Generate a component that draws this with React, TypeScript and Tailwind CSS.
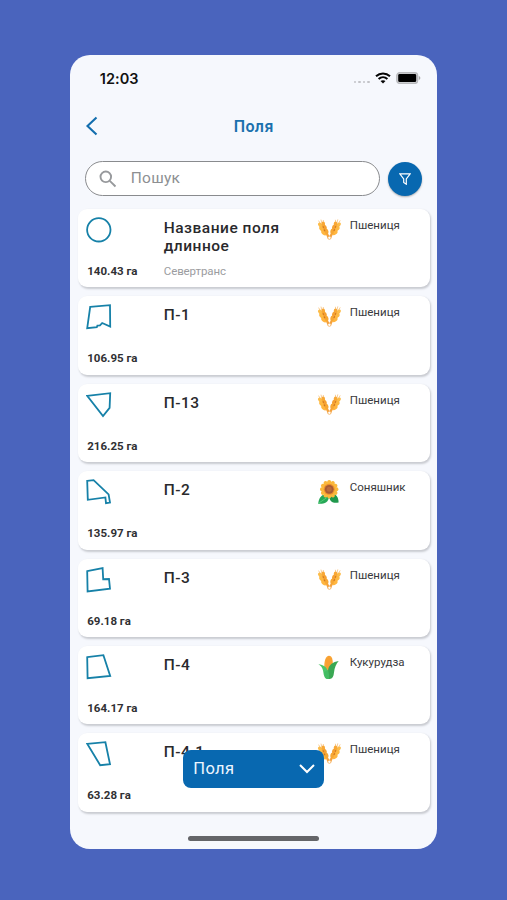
import React from 'react';

type Crop = 'wheat' | 'sunflower' | 'corn';

interface Field {
  name: string;
  owner?: string;
  area: string;
  crop: Crop;
  shape: string;
}

const cropNames: Record<Crop, string> = {
  wheat: 'Пшениця',
  sunflower: 'Соняшник',
  corn: 'Кукурудза',
};

const fields: Field[] = [
  { name: 'Название поля длинное', owner: 'Севертранс', area: '140.43 га', crop: 'wheat', shape: '' },
  { name: 'П-1', area: '106.95 га', crop: 'wheat', shape: 'M4.2 2.8L24 1.2L24.2 22.6L16.2 19L14 21.4L11.4 21.6L10.8 23.2L1.2 24.2Z' },
  { name: 'П-13', area: '216.25 га', crop: 'wheat', shape: 'M1.2 3.8L24.2 1.2L23.6 15.8L17 24Z' },
  { name: 'П-2', area: '135.97 га', crop: 'sunflower', shape: 'M1.2 1.8L7.6 1.2L22.6 15.4L24 23.6L20 24.2L19.4 18.4L1.8 20.8Z' },
  { name: 'П-3', area: '69.18 га', crop: 'wheat', shape: 'M1.2 4.2L16.6 1.2L17.2 12.2L23 12L24 21.6L1.6 24.4Z' },
  { name: 'П-4', area: '164.17 га', crop: 'corn', shape: 'M1.2 3.2L17.4 1.2L24.2 22L1.6 24.2Z' },
  { name: 'П-4.1', area: '63.28 га', crop: 'wheat', shape: 'M1.2 2.8L19.4 1.2L24 23.2L14.2 24.2Z' },
];

function FieldShape({ path }: { path: string }) {
  return (
    <svg className="h-[26px] w-[26px] shrink-0" viewBox="0 0 26 26" fill="none" stroke="#1681a8" strokeWidth="1.8">
      {path ? <path d={path} /> : <circle cx="12.8" cy="12.8" r="11.7" />}
    </svg>
  );
}

function WheatEar() {
  return (
    <g>
      <path d="M12.2 20.6L5.6 7" stroke="#f5a13c" strokeWidth="2.4" fill="none" />
      <path d="M1.6 2.6L3.8 6.6M4 1.6L5 6M6.4 2L5.8 6" stroke="#f8c27c" strokeWidth="0.8" />
      <ellipse cx="3.4" cy="7.2" rx="1.8" ry="2.9" transform="rotate(-42 3.4 7.2)" fill="#fcbc4a" />
      <ellipse cx="6.3" cy="6.2" rx="1.8" ry="2.6" transform="rotate(-5 6.3 6.2)" fill="#f8a836" />
      <ellipse cx="5" cy="11" rx="2.1" ry="3.2" transform="rotate(-48 5 11)" fill="#feb942" />
      <ellipse cx="7.9" cy="9.8" rx="1.9" ry="2.8" transform="rotate(-8 7.9 9.8)" fill="#f5a030" />
      <ellipse cx="7.1" cy="14.8" rx="2.1" ry="3.2" transform="rotate(-52 7.1 14.8)" fill="#ffb640" />
      <ellipse cx="9.6" cy="13.6" rx="1.9" ry="2.9" transform="rotate(-10 9.6 13.6)" fill="#f7a734" />
      <path d="M5.8 8.4L6.6 9.8M7 11.6L8 13.2" stroke="#cf7622" strokeWidth="1.2" />
    </g>
  );
}

function CropIcon({ crop }: { crop: Crop }) {
  if (crop === 'wheat') {
    return (
      <svg className="h-6 w-6" viewBox="0 0 24 24">
        <WheatEar />
        <g transform="translate(24.8 -.2) scale(-1 1)">
          <WheatEar />
        </g>
        <circle cx="12.4" cy="19.8" r="1.6" fill="#fff" stroke="#f5a84c" strokeWidth="0.7" />
      </svg>
    );
  }
  if (crop === 'sunflower') {
    return (
      <svg className="h-6 w-6" viewBox="0 0 24 24">
        <path d="M12 16C6 12.5 2 16 1.2 23.8C6.5 24.2 12 23 12 16Z" fill="#27a857" />
        <path d="M12 16C17 12 21.4 15 21.6 22.4C17 23.8 12.4 22.2 12 16Z" fill="#20984d" />
        <path d="M1.4 23.4L9.8 17.6" stroke="#55cf78" strokeWidth="0.9" />
        {[0, 30, 60, 90, 120, 150, 180, 210, 240, 270, 300, 330].map((angle) => (
          <ellipse key={angle} cx="12.2" cy="3.5" rx="2.2" ry="3.4" transform={`rotate(${angle} 12.2 9.3)`} fill="#fbb83c" />
        ))}
        <circle cx="12.2" cy="9.3" r="5.5" fill="#ec8e2e" />
        <circle cx="12.2" cy="9.3" r="4.4" fill="#a75b35" />
        <circle cx="12.2" cy="9.3" r="2.5" fill="#bd6b3b" />
      </svg>
    );
  }
  return (
    <svg className="h-6 w-6" viewBox="0 0 24 24">
      <path d="M7.3 13C7 6 8.7 .8 12 .8S16.2 5 15.8 13L11.6 19Z" fill="#faa635" />
      <path d="M10 3V14M12 1V15M14 3V13" stroke="#f28d2e" strokeWidth="0.5" />
      <path d="M1.4 9.3C6.4 9.8 10.6 12 11.3 18L12 24H9.8C6.8 23 6.7 19 6 15.6C5.4 12.5 3.9 10.8 1.4 9.3Z" fill="#4cc66a" />
      <path d="M21.7 6C16 6.7 11.2 10 11 16L11.4 24C15 24.3 16.6 22 17 17.4C17.5 12.5 19.2 9 21.7 6Z" fill="#3aa853" />
      <path d="M11 15C12.2 19 11.6 21 11.6 24C8.4 24.2 7.4 21 7 17Z" fill="#43bd63" />
    </svg>
  );
}

function FieldCard({ field }: { field: Field }) {
  return (
    <article className="flex h-[78.4px] shrink-0 rounded-[9px] bg-white pl-2 shadow-[1px_1.5px_2px_rgba(60,64,72,0.24)]">
      <div className="flex w-[77.5px] shrink-0 flex-col pt-[8px]">
        <FieldShape path={field.shape} />
        <span className="mt-[21px] whitespace-nowrap pl-[1px] text-[11.5px] leading-[14px] font-bold text-[#303033]">
          {field.area}
        </span>
      </div>
      <div className="flex w-[153px] shrink-0 flex-col pt-[10px]">
        <h2 className="w-[130px] text-[15.5px] leading-[18px] font-medium tracking-[0.5px] text-[#29292c]">{field.name}</h2>
        {field.owner && <p className="mt-[9px] text-[11.5px] leading-[14px] tracking-[-0.1px] text-[#9b9ca0]">{field.owner}</p>}
      </div>
      <div className="flex gap-[9px] pt-[9px]">
        <CropIcon crop={field.crop} />
        <span className="text-[11.5px] leading-[14px] text-[#39393c]">{cropNames[field.crop]}</span>
      </div>
    </article>
  );
}

function StatusBar() {
  return (
    <div className="flex h-[46px] shrink-0 items-center justify-between pt-px pr-[16px] pl-[29.5px]">
      <time className="font-[Inter,sans-serif] text-[14.5px] font-semibold tracking-[0.05px] text-[#111]">12:03</time>
      <div className="mb-px flex items-center">
        <div className="mt-[8px] mr-[5px] flex gap-[2px]">
          <i className="h-[2.5px] w-[2.5px] rounded-full bg-[#c2c3c7]" />
          <i className="h-[2.5px] w-[2.5px] rounded-full bg-[#c2c3c7]" />
          <i className="h-[2.5px] w-[2.5px] rounded-full bg-[#c2c3c7]" />
          <i className="h-[2.5px] w-[2.5px] rounded-full bg-[#c2c3c7]" />
        </div>
        <svg className="h-[12px] w-[16px]" viewBox="0 0 16 12" fill="none" stroke="#050505" strokeWidth="2">
          <path d="M1 4.3C5 .5 11 .5 15 4.3M3.6 7.1C6.2 4.7 9.8 4.7 12.4 7.1" />
          <path d="M5.5 9.1C7 7.8 9 7.8 10.5 9.1L8 11.6Z" fill="#050505" stroke="none" />
        </svg>
        <svg className="ml-[5px] h-[12px] w-[25px]" viewBox="0 0 25 12">
          <rect x=".8" y=".8" width="20.8" height="10.6" rx="2.8" fill="#d5d6d9" stroke="#b9babd" strokeWidth="1.4" />
          <rect x="2.2" y="2.1" width="18" height="8" rx="1.4" fill="#000" />
          <path d="M22.8 4.1Q24.4 4.6 24.4 6T22.8 7.9Z" fill="#aaa" />
        </svg>
      </div>
    </div>
  );
}

export default function App() {
  return (
    <div className="flex h-[900px] w-[507px] justify-center overflow-hidden bg-[#4a64bd] pt-[55px] font-[Roboto,sans-serif]">
      <main className="relative flex h-[793.5px] w-[366.5px] flex-col overflow-hidden rounded-[20px] bg-[#f6f8fd]">
        <StatusBar />
        <header className="grid h-[50px] shrink-0 grid-cols-[1fr_auto_1fr] items-center">
          <svg className="ml-[14.5px] h-[20px] w-[14px]" viewBox="0 0 14 20" fill="none" stroke="#136eae" strokeWidth="2.1">
            <path d="M11.5 1.5L2.5 10L11.5 18.5" />
          </svg>
          <h1 className="pt-[2px] pl-[0.5px] text-[16px] leading-6 font-semibold tracking-[0.4px] text-[#1b71ae]">Поля</h1>
        </header>
        <div className="flex shrink-0 items-center gap-2 pt-[10px] pl-[15px]">
          <label className="flex h-[35px] w-[295px] items-center rounded-full border border-[#898b8e] bg-white pl-[13px]">
            <svg className="h-[18px] w-[18px]" viewBox="0 0 18 18" fill="none" stroke="#97999c" strokeWidth="1.9">
              <circle cx="6.8" cy="6.8" r="5.3" />
              <path d="M10.8 10.8L16.5 16.5" />
            </svg>
            <span className="ml-[13.5px] text-[15.5px] tracking-[0.25px] text-[#8d8f92]">Пошук</span>
          </label>
          <button className="flex h-[34px] w-[34px] items-center justify-center rounded-full bg-[#0868b0] shadow-[0_1px_2px_rgba(0,0,0,0.3)]">
            <svg className="h-[12px] w-[12px]" viewBox="0 0 12 12" fill="none" stroke="#fff" strokeWidth="1.2">
              <path d="M.8 .8H11.2L7.3 6V11.2L4.7 9.5V6Z" />
            </svg>
          </button>
        </div>
        <section className="flex flex-col gap-[9px] pt-[13px] pr-[6.5px] pl-2">
          {fields.map((field) => (
            <FieldCard key={field.name} field={field} />
          ))}
        </section>
        <button className="absolute top-[694.5px] left-[113px] flex h-[38.5px] w-[141px] items-center justify-between rounded-lg bg-[#0868b0] pt-[2px] pr-[9px] pl-[10px] text-[16.5px] tracking-[0.4px] text-[#edf6ff]">
          Поля
          <svg className="mb-[2px] h-[10px] w-[16px]" viewBox="0 0 16 10" fill="none" stroke="#fff" strokeWidth="2">
            <path d="M1 1L8 8L15 1" />
          </svg>
        </button>
        <div className="mx-auto mt-auto mb-[8px] h-[4.5px] w-[131px] rounded-full bg-[#646569]" />
      </main>
    </div>
  );
}
